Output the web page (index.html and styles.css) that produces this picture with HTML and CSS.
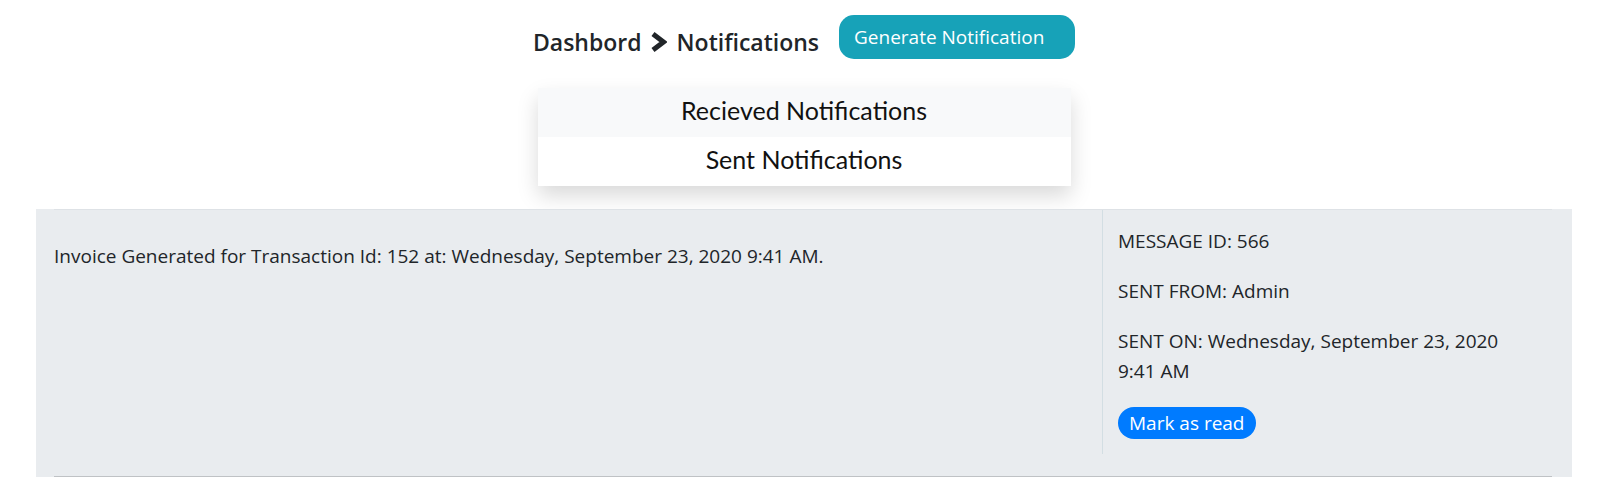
FILE: index.html
```html
<!DOCTYPE html>
<html lang="en">
<head>
<meta charset="utf-8">
<title>Notifications</title>
<link rel="stylesheet" href="styles.css">
</head>
<body>
  <div class="head">
    <header class="topbar">
      <nav class="crumbs">
        <span class="crumb">Dashbord</span>
        <svg class="chev" width="17" height="22" viewBox="0 0 17 22" aria-hidden="true">
          <polyline points="3,3 13.5,11 3,19" fill="none" stroke="#212529" stroke-width="5" stroke-linejoin="miter"/>
        </svg>
        <span class="crumb">Notifications</span>
      </nav>
      <button class="gen-btn">Generate Notification</button>
    </header>

    <div class="tabs">
      <div class="tab tab-active">Recieved Notifications</div>
      <div class="tab">Sent Notifications</div>
    </div>
  </div>

  <section class="band">
    <div class="row">
      <div class="msg">Invoice Generated for Transaction Id: 152 at: Wednesday, September 23, 2020 9:41 AM.</div>
      <div class="meta">
        <p class="meta-line">MESSAGE ID: 566</p>
        <p class="meta-line">SENT FROM: Admin</p>
        <p class="meta-line meta-last">SENT ON: Wednesday, September 23, 2020<br>9:41 AM</p>
        <button class="read-btn">Mark as read</button>
      </div>
    </div>
  </section>
</body>
</html>
```

FILE: styles.css
```css
* { box-sizing: border-box; }

html, body {
  margin: 0;
  padding: 0;
  background: #ffffff;
}

body {
  font-family: "Open Sans", "Noto Sans", sans-serif;
  color: #212529;
  font-size: 19px;
  line-height: 30px;
}

.head {
  padding-right: 3px;
}

.topbar {
  display: flex;
  justify-content: center;
  align-items: flex-start;
  padding-top: 15px;
}

.crumbs {
  display: flex;
  align-items: center;
  margin-top: 12px;
  height: 30px;
}

.crumb {
  font-family: "Open Sans", sans-serif;
  font-weight: 600;
  font-size: 23px;
  line-height: 30px;
  color: #212529;
}

.chev {
  display: block;
  margin: 0 10px 0 8px;
}

.gen-btn {
  margin-left: 20px;
  width: 236px;
  height: 44px;
  padding: 0 0 0 15px;
  text-align: left;
  border: none;
  border-radius: 15px;
  background: #17a2b8;
  color: #ffffff;
  font-family: "Open Sans", sans-serif;
  font-size: 19px;
  line-height: 44px;
}

.tabs {
  width: 533px;
  margin: 29px auto 0;
  background: #ffffff;
  box-shadow: 0 10px 20px rgba(0, 0, 0, 0.15);
}

.tab {
  font-family: "Lato", sans-serif;
  font-size: 25px;
  line-height: 45px;
  padding-bottom: 4px;
  text-align: center;
  color: #111111;
}

.tab-active {
  background: #f8f9fa;
}

.band {
  margin: 23px 39px 0 36px;
  padding: 0 20px 0 18px;
  background: #e9ecef;
}

.row {
  display: flex;
  border-top: 1px solid #dee2e6;
  border-bottom: 1px solid #bfc2c5;
  padding-bottom: 22px;
}

.msg {
  flex: 1;
  padding-top: 31px;
}

.meta {
  width: 450px;
  border-left: 1px solid #d3dee3;
  padding: 16px 15px 15px 15px;
}

.meta-line {
  margin: 0 0 20px;
}

.meta-last {
  margin-bottom: 21px;
}

.read-btn {
  display: block;
  height: 32px;
  padding: 0 11px;
  border: none;
  border-radius: 16px;
  background: #007bff;
  color: #ffffff;
  font-family: "Open Sans", sans-serif;
  font-size: 19px;
  line-height: 32px;
}
```
